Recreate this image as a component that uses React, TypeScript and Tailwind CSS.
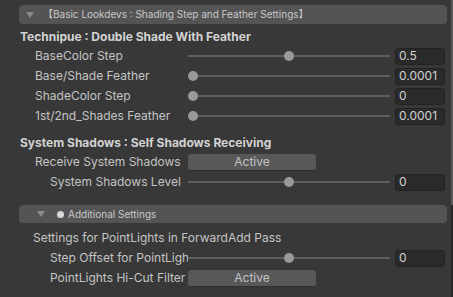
import React from "react";

const font = "font-['Inter','Noto_Sans_CJK_JP',sans-serif]";

function Slider({ value }: { value: number }) {
  return (
    <div className="relative w-[202px] h-[10px] shrink-0">
      <div className="absolute left-0 right-0 top-[4px] h-[2px] bg-[#5e5e5e]" />
      <div
        className="absolute top-0 w-[10px] h-[10px] rounded-full bg-[#999999]"
        style={{ left: `${value * 192}px` }}
      />
    </div>
  );
}

function Field({ text }: { text: string }) {
  return (
    <div className="ml-[5px] w-[50px] h-[17px] rounded-[3px] bg-[#2a2a2a] border border-[#222] flex items-center pl-[3px] text-[12px] text-[#d2d2d2] leading-none">
      {text}
    </div>
  );
}

function Label({ text, indent }: { text: string; indent: number }) {
  return (
    <div
      className={`w-[169px] shrink-0 text-[12px] text-[#c4c4c4] whitespace-nowrap overflow-hidden ${
        indent === 1 ? "pl-[16px]" : indent === 2 ? "pl-[31px]" : "pl-[14px]"
      }`}
    >
      {text}
    </div>
  );
}

function SliderRow({ label, value, text, indent = 1 }: { label: string; value: number; text: string; indent?: number }) {
  return (
    <div className="flex items-center h-[20px]">
      <Label text={label} indent={indent} />
      <Slider value={value} />
      <Field text={text} />
    </div>
  );
}

function ButtonRow({ label, indent = 1 }: { label: string; indent?: number }) {
  return (
    <div className="flex items-center h-[20px]">
      <Label text={label} indent={indent} />
      <div className="w-[128px] h-[17px] rounded-[3px] bg-[#585858] border-b border-[#2e2e2e] flex items-center justify-center text-[12px] text-[#c4c4c4]">
        Active
      </div>
    </div>
  );
}

function Triangle() {
  return (
    <svg width="8" height="6" viewBox="0 0 8 6" className="shrink-0">
      <polygon points="0,0 8,0 4,6" fill="#8a8a8a" />
    </svg>
  );
}

export default function App() {
  return (
    <div className={`flex w-[453px] h-[297px] bg-[#383838] overflow-hidden ${font}`}>
      <div className="flex-1 pl-[19px] pr-[4px] pt-[5px]">
        <div className="h-[19px] rounded-[4px] bg-[#545454] flex items-center pl-[7px] text-[10px] text-[#c8c8c8] whitespace-nowrap">
          <Triangle />
          <span className="ml-[9px]">【Basic Lookdevs : Shading Step and Feather Settings】</span>
        </div>

        <div className="mt-[3px] h-[19px] flex items-center pl-[1px] text-[12px] font-bold text-[#d2d2d2]">
          Technipue : Double Shade With Feather
        </div>
        <SliderRow label="BaseColor Step" value={0.5} text="0.5" />
        <SliderRow label="Base/Shade Feather" value={0} text="0.0001" />
        <SliderRow label="ShadeColor Step" value={0} text="0" />
        <SliderRow label="1st/2nd_Shades Feather" value={0} text="0.0001" />

        <div className="mt-[8px] h-[18px] flex items-center pl-[1px] text-[12px] font-bold text-[#d2d2d2]">
          System Shadows : Self Shadows Receiving
        </div>
        <ButtonRow label="Receive System Shadows" />
        <SliderRow label="System Shadows Level" value={0.5} text="0" indent={2} />

        <div className="mt-[13px] h-[18px] rounded-[4px] bg-[#545454] flex items-center pl-[18px] text-[10px] text-[#c8c8c8] whitespace-nowrap">
          <Triangle />
          <span className="ml-[12px] w-[7px] h-[7px] rounded-full bg-[#d8d8d8]" />
          <span className="ml-[4px]">Additional Settings</span>
        </div>

        <div className="mt-[5px] h-[20px] flex items-center pl-[14px] text-[12px] text-[#c4c4c4]">
          Settings for PointLights in ForwardAdd Pass
        </div>
        <SliderRow label="Step Offset for PointLigh" value={0.5} text="0" indent={2} />
        <ButtonRow label="PointLights Hi-Cut Filter" indent={2} />
      </div>
      <div className="w-[2px] flex flex-col bg-[#2a2a2a]">
        <div className="h-[205px] bg-[#5a5a5a]" />
      </div>
    </div>
  );
}
